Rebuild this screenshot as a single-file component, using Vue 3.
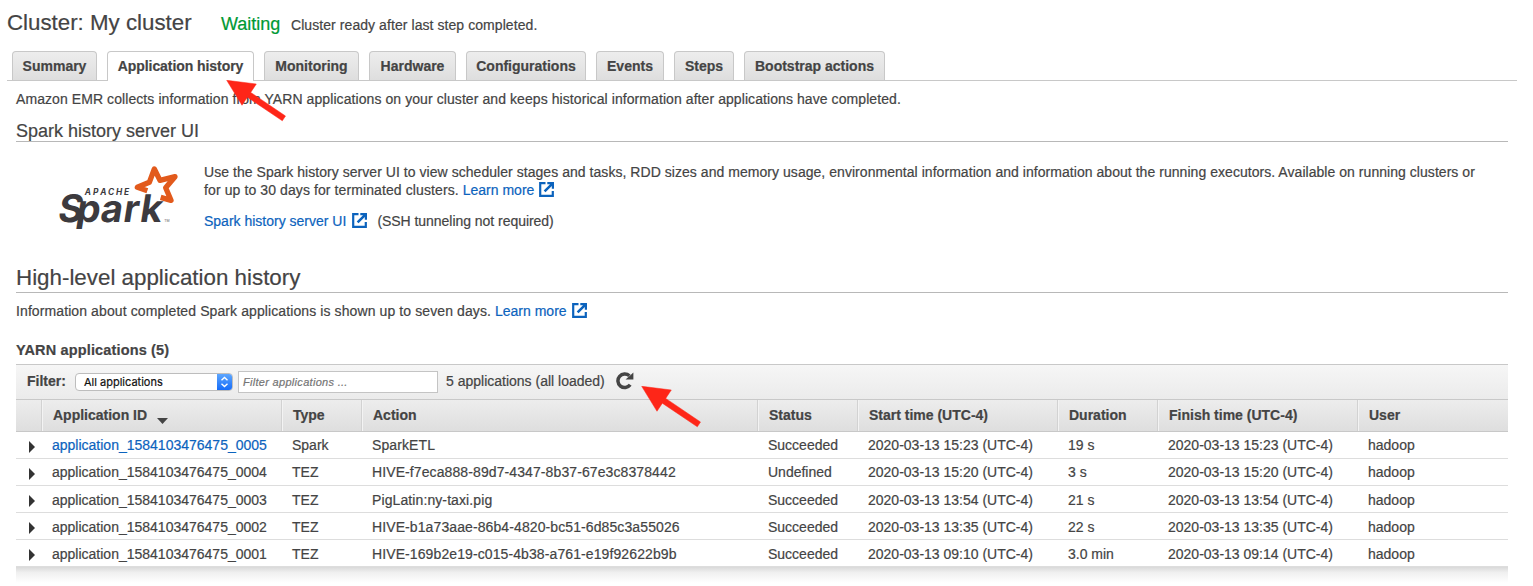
<script setup>
const tabs = [
  { label: 'Summary', width: 85 },
  { label: 'Application history', width: 147, active: true },
  { label: 'Monitoring', width: 95 },
  { label: 'Hardware', width: 87 },
  { label: 'Configurations', width: 120 },
  { label: 'Events', width: 68 },
  { label: 'Steps', width: 60 },
  { label: 'Bootstrap actions', width: 141 },
]
const headers = ['Application ID', 'Type', 'Action', 'Status', 'Start time (UTC-4)', 'Duration', 'Finish time (UTC-4)', 'User']
const rows = [
  ['application_1584103476475_0005', 'Spark', 'SparkETL', 'Succeeded', '2020-03-13 15:23 (UTC-4)', '19 s', '2020-03-13 15:23 (UTC-4)', 'hadoop'],
  ['application_1584103476475_0004', 'TEZ', 'HIVE-f7eca888-89d7-4347-8b37-67e3c8378442', 'Undefined', '2020-03-13 15:20 (UTC-4)', '3 s', '2020-03-13 15:20 (UTC-4)', 'hadoop'],
  ['application_1584103476475_0003', 'TEZ', 'PigLatin:ny-taxi.pig', 'Succeeded', '2020-03-13 13:54 (UTC-4)', '21 s', '2020-03-13 13:54 (UTC-4)', 'hadoop'],
  ['application_1584103476475_0002', 'TEZ', 'HIVE-b1a73aae-86b4-4820-bc51-6d85c3a55026', 'Succeeded', '2020-03-13 13:35 (UTC-4)', '22 s', '2020-03-13 13:35 (UTC-4)', 'hadoop'],
  ['application_1584103476475_0001', 'TEZ', 'HIVE-169b2e19-c015-4b38-a761-e19f92622b9b', 'Succeeded', '2020-03-13 09:10 (UTC-4)', '3.0 min', '2020-03-13 09:14 (UTC-4)', 'hadoop'],
]
</script>

<template>
  <div class="page">
    <svg class="defs" width="0" height="0">
      <symbol id="ext" viewBox="0 0 15 15">
        <path d="M6.5 1.2H1.2V13.8H13.8V9" fill="none" stroke="currentColor" stroke-width="2.2" />
        <path d="M8.3 0H15V6.8H12.8V4L6.5 10.3L4.7 8.5L11 2.2H8.3Z" fill="currentColor" />
      </symbol>
      <symbol id="pointer" viewBox="0 0 60 42">
        <path d="M.7 .3L30.3 4L24.7 12.4L59.5 36L56.3 40.8L21.3 17.2L16 25.3Z" fill="#fe2618" stroke="#fe2618" stroke-width=".5" />
      </symbol>
    </svg>

    <header class="title">
      <h1>Cluster: My cluster</h1>
      <span class="state">Waiting</span>
      <span class="note">Cluster ready after last step completed.</span>
    </header>

    <nav class="tabs">
      <a v-for="t in tabs" :key="t.label" class="tab" :class="{ active: t.active }" :style="{ width: t.width + 'px' }">{{ t.label }}</a>
    </nav>

    <main>
      <p class="intro">Amazon EMR collects information from YARN applications on your cluster and keeps historical information after applications have completed.</p>
      <h2 class="small">Spark history server UI</h2>

      <section class="spark">
        <svg class="logo" width="160" height="85" viewBox="0 0 480 255">
          <clipPath id="cut"><rect x="0" y="90" width="480" height="132" /></clipPath>
          <path d="M322 107L292 97L328 82L343 42L360 76L405 65L377 98L393 136L362 127" fill="none" stroke="#e25a1c" stroke-width="16" stroke-linejoin="round" />
          <text class="apache" x="134 159 181 204 228 252" y="119">APACHE</text>
          <g clip-path="url(#cut)"><text class="word" x="50 105 178 246 296" y="0" transform="translate(0 200) skewX(-9)">Spark</text></g>
          <text class="tm" x="373" y="200">TM</text>
        </svg>
        <div class="copy">
          <p><span class="line">Use the Spark history server UI to view scheduler stages and tasks, RDD sizes and memory usage, environmental information and information about the running executors. Available on running clusters or</span><br><span class="loose">for up to 30 days for terminated clusters. </span><a>Learn more<svg class="ext"><use href="#ext" /></svg></a></p>
          <p class="second"><a>Spark history server UI<svg class="ext"><use href="#ext" /></svg></a><span class="ssh">(SSH tunneling not required)</span></p>
        </div>
      </section>

      <h2 class="large">High-level application history</h2>
      <p class="info"><span class="loose">Information about completed Spark applications is shown up to seven days. </span><a>Learn more<svg class="ext"><use href="#ext" /></svg></a></p>
      <h3>YARN applications (5)</h3>

      <div class="filter">
        <b>Filter:</b>
        <div class="select"><span>All applications</span>
          <i><svg width="15" height="18" viewBox="0 0 15 18"><path d="M4.5 7.2L7.5 4.4L10.5 7.2M4.5 10.8L7.5 13.6L10.5 10.8" fill="none" stroke="#fff" stroke-width="1.4" /></svg></i>
        </div>
        <div class="input">Filter applications ...</div>
        <span class="count">5 applications (all loaded)</span>
        <svg class="refresh" width="18" height="18" viewBox="0 0 18 18">
          <path d="M14.2 12.8A6.8 6.8 0 1 1 13.4 3.8" fill="none" stroke="#444" stroke-width="3.5" />
          <path d="M17.4 .4V7.6H9.6Z" fill="#444" />
        </svg>
      </div>

      <div class="row head">
        <span></span>
        <span v-for="h in headers" :key="h">{{ h }}<svg v-if="h === 'Application ID'" class="sort" width="11" height="6" viewBox="0 0 11 6"><path d="M0 0H11L5.5 6Z" fill="#444" /></svg></span>
      </div>
      <div v-for="(r, i) in rows" :key="r[0]" class="row" :class="{ low: i > 1 }">
        <span class="toggle"><svg width="6" height="12" viewBox="0 0 6 12"><path d="M0 0L6 6L0 12Z" fill="#333" /></svg></span>
        <span v-for="(c, j) in r" :key="j" :class="{ link: i === 0 && j === 0, loose: j === 2 }">{{ c }}</span>
      </div>
      <div class="shade"></div>
    </main>

    <svg class="pointer first"><use href="#pointer" /></svg>
    <svg class="pointer other"><use href="#pointer" /></svg>
  </div>
</template>

<style>
body { margin: 0; background: #fff; overflow: hidden; }
</style>

<style scoped>
* { box-sizing: border-box; }
.page { position: relative; width: 1533px; height: 586px; overflow: hidden; font: 14px/18px "Liberation Sans", Arial, sans-serif; color: #444; -webkit-text-stroke: .2px; white-space: nowrap; }
.defs { position: absolute; }
h1, h2, h3, p { margin: 0; font-weight: normal; }
a, .link { color: #0c63bd; }
.title { display: flex; align-items: baseline; height: 51px; padding: 9px 0 0 7px; }
h1 { width: 214px; font-size: 22.3px; line-height: 27px; }
.state { width: 70px; font-size: 18px; color: #093; }
.note { letter-spacing: .07px; }
.tabs { display: flex; gap: 10px; height: 30px; margin: 0 16px 0 7px; padding-left: 5px; border-bottom: 1px solid #c8c8c8; }
.tab { height: 29px; border: 1px solid #c8c8c8; border-bottom: 0; border-radius: 4px 4px 0 0; background: linear-gradient(#ededed, #dedede); color: #444; font-weight: bold; line-height: 28px; text-align: center; }
.tab.active { height: 30px; background: #fff; letter-spacing: -.07px; }
main { width: 1492px; margin-left: 16px; }
.intro { height: 39px; padding-top: 9px; letter-spacing: .078px; }
.small { height: 22px; font-size: 18px; line-height: 23px; border-bottom: 1px solid #b8b8b8; }
.spark { display: flex; height: 120px; }
.logo { margin: 13px 4px 0 24px; flex: none; -webkit-text-stroke: 0; }
.copy { padding-top: 21px; }
.line { letter-spacing: .045px; }
.loose { letter-spacing: .1px; }
.second { margin-top: 13px; }
.ext { width: 15px; height: 15px; margin-left: 5px; vertical-align: -2px; }
.second .ext { margin-left: 6px; }
.ssh { margin-left: 10px; letter-spacing: -.04px; }
.apache { font: italic bold 25px Inter, sans-serif; fill: #3c3a3e; }
.word { font: bold 114px Inter, sans-serif; fill: #3c3a3e; }
.tm { font: 11px "Liberation Sans", sans-serif; fill: #666; }
.large { height: 31px; font-size: 22.35px; line-height: 31px; border-bottom: 1px solid #b8b8b8; }
.info { height: 48px; padding-top: 9px; }
h3 { height: 23px; font-size: 14.5px; font-weight: bold; letter-spacing: .15px; }
.filter { display: flex; align-items: center; height: 35px; border-top: 1px solid #c8c8c8; background: linear-gradient(#f6f6f6, #ebebeb); padding-left: 11px; }
.filter b { width: 48px; margin-top: -2px; }
.select { display: flex; width: 158px; height: 18px; border: 1px solid #bdbdbd; border-radius: 4px; background: #fff; overflow: hidden; font: 11px/17px Inter, sans-serif; color: #111; padding-left: 8px; justify-content: space-between; }
.select i { width: 15px; height: 18px; margin-top: -1px; background: linear-gradient(#62aaff, #1269f8); }
.input { width: 200px; height: 22px; margin-left: 5px; padding-left: 4px; border: 1px solid #c4c4c4; background: #fff; font: italic 11px/21px "Liberation Sans", sans-serif; letter-spacing: .3px; color: #757575; }
.count { margin: -2px 0 0 8px; width: 170px; }
.refresh { margin-top: -3px; }
.row { display: grid; grid-template-columns: 26px 240px 80px 396px 100px 200px 100px 200px 150px; height: 27px; border-bottom: 1px solid #ddd; line-height: 27px; }
.row span { padding-left: 10px; }
.row.low { line-height: 28px; }
.row .toggle { padding: 9px 0 0 13px; line-height: 0; }
.row.head { height: 33px; border: solid #c8c8c8; border-width: 1px 0; background: linear-gradient(#ededed, #dedede); font-weight: bold; line-height: 31px; }
.row.head span { margin-right: -1px; border-right: 1px solid #f3f3f3; box-shadow: inset -1px 0 #d2d2d2; padding-left: 11px; }
.row.head span:last-child { margin: 0; border: 0; box-shadow: none; }
.sort { margin-left: 10px; vertical-align: -4px; }
.shade { height: 16px; background: linear-gradient(#d9d9d9, #f0f0f0 35%, #fff); }
.pointer { position: absolute; width: 60px; height: 42px; }
.first { left: 226px; top: 80px; }
.other { left: 641px; top: 386px; }
</style>
